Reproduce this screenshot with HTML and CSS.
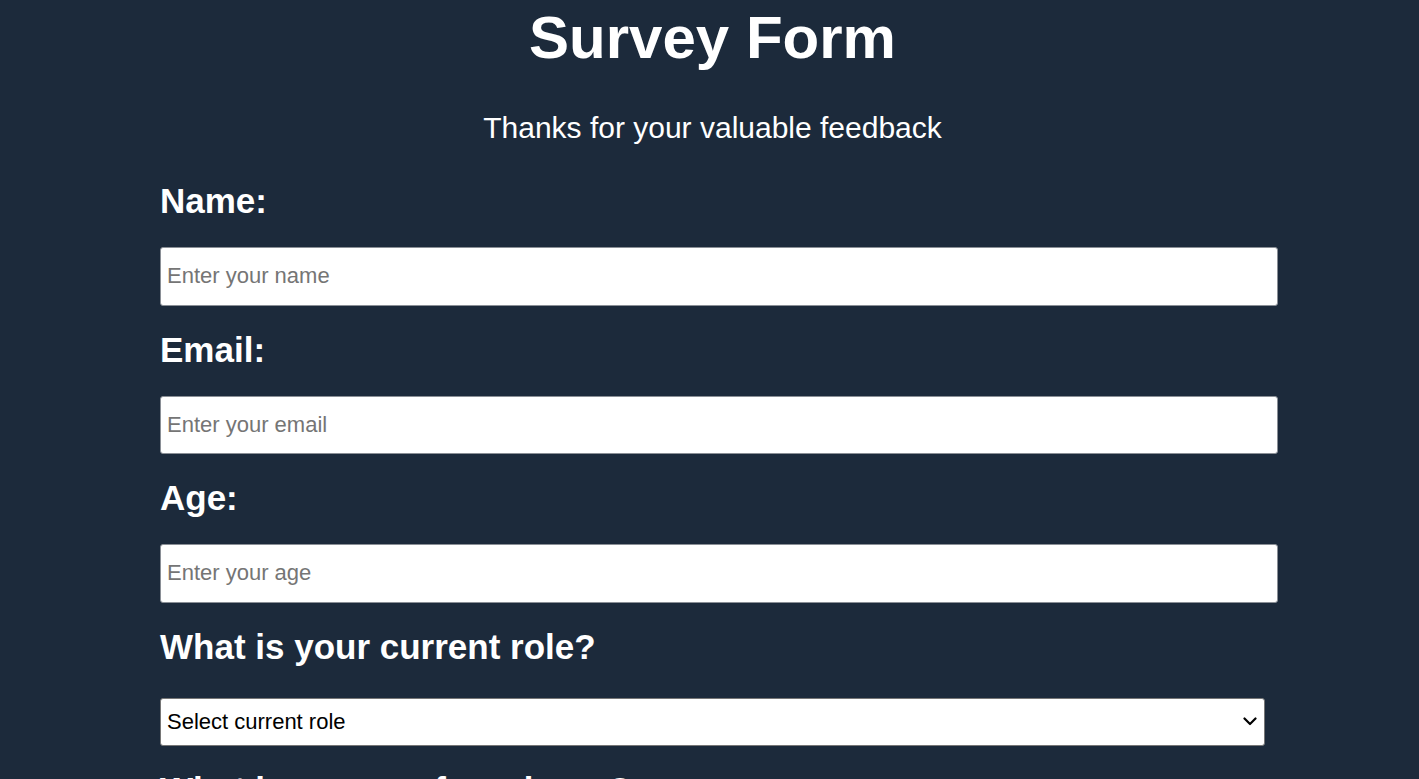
FILE: index.html
```html
<!DOCTYPE html>
<html lang="en">
<head>
<meta charset="utf-8">
<title>Survey Form</title>
<link rel="stylesheet" href="styles.css">
</head>
<body>
<div class="page">
  <main class="container">
    <header class="header">
      <h1 class="title">Survey Form</h1>
      <p class="subtitle">Thanks for your valuable feedback</p>
    </header>
    <form class="form">
      <label class="field-label" for="name">Name:</label>
      <input class="text-input" id="name" type="text" placeholder="Enter your name">

      <label class="field-label" for="email">Email:</label>
      <input class="text-input" id="email" type="email" placeholder="Enter your email">

      <label class="field-label" for="age">Age:</label>
      <input class="text-input" id="age" type="number" placeholder="Enter your age">

      <label class="field-label field-label-select" for="role">What is your current role?</label>
      <div class="select-wrap">
        <select class="select-input" id="role">
          <option>Select current role</option>
          <option>Student</option>
          <option>Full Time Job</option>
          <option>Full Time Learner</option>
          <option>Prefer not to say</option>
          <option>Other</option>
        </select>
        <svg class="select-arrow" width="14" height="9" viewBox="0 0 14 9" aria-hidden="true">
          <path d="M1.5 1.5 L7 7 L12.5 1.5" fill="none" stroke="#000" stroke-width="2.2" stroke-linecap="round" stroke-linejoin="round"/>
        </svg>
      </div>

      <p class="field-label">What is your preferred way?</p>
      <div class="options">
        <label class="option"><input type="radio" name="way"> Definitely</label>
        <label class="option"><input type="radio" name="way"> Maybe</label>
        <label class="option"><input type="radio" name="way"> Not sure</label>
      </div>
    </form>
  </main>
</div>
</body>
</html>
```

FILE: styles.css
```css
html, body {
  margin: 0;
  padding: 0;
}

body {
  background: #1c2a3b;
  color: #ffffff;
  font-family: "Liberation Sans", Arial, sans-serif;
}

.page {
  padding-left: 160px;
}

.container {
  width: 1105px;
}

.header {
  text-align: center;
  padding-top: 3px;
}

.title {
  margin: 0;
  font-size: 60px;
  line-height: 69px;
  font-weight: bold;
}

.subtitle {
  margin: 39px 0 36px;
  font-size: 30px;
  line-height: 34px;
}

.form {
  display: block;
}

.field-label {
  display: block;
  margin: 24px 0 26px;
  font-size: 35px;
  line-height: 40px;
  font-weight: bold;
}

.field-label-select {
  margin-bottom: 31px;
}

.text-input {
  display: block;
  box-sizing: border-box;
  width: 1118px;
  height: 58.5px;
  margin: 0;
  padding: 0 6px;
  border: 1px solid #8a8f96;
  border-radius: 3px;
  background: #ffffff;
  font-family: "Liberation Sans", Arial, sans-serif;
  font-size: 22px;
  color: #000;
}

.text-input::placeholder {
  color: #757575;
}

.select-wrap {
  position: relative;
  width: 1105px;
}

.select-input {
  display: block;
  box-sizing: border-box;
  width: 1105px;
  height: 48.5px;
  margin: 0;
  padding: 0 6px;
  border: 1px solid #767676;
  border-radius: 3px;
  background: #ffffff;
  font-family: "Liberation Sans", Arial, sans-serif;
  font-size: 22px;
  color: #000;
  appearance: none;
  -webkit-appearance: none;
}

.select-arrow {
  position: absolute;
  right: 8px;
  top: 19.5px;
  pointer-events: none;
}

.options {
  display: flex;
  flex-direction: column;
  gap: 10px;
  font-size: 22px;
}
```
